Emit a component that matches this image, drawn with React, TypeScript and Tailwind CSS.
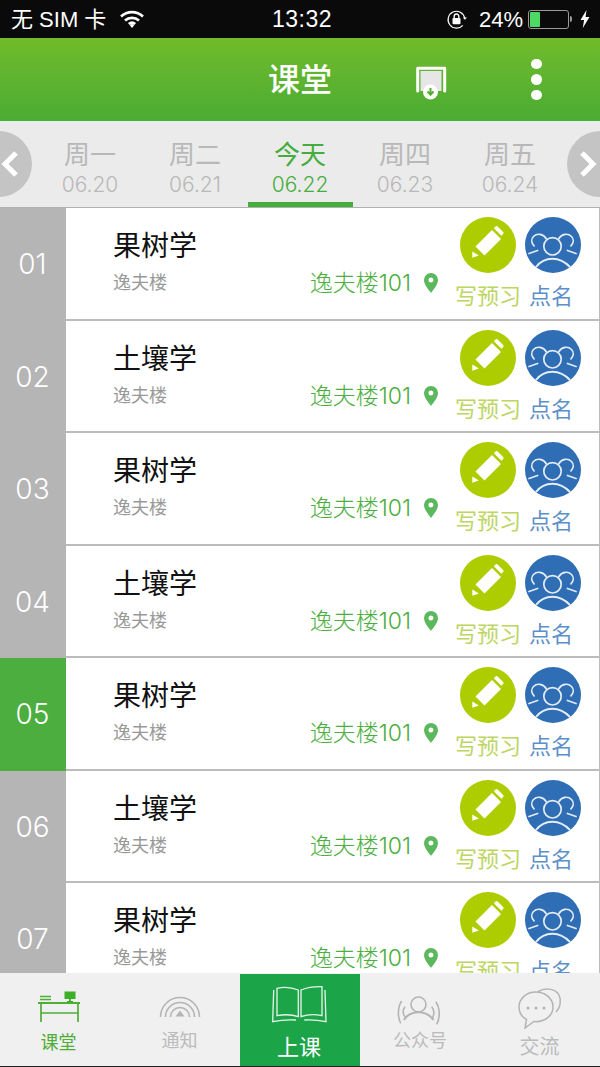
import React from "react";

const days = [
  { label: "周一", date: "06.20" },
  { label: "周二", date: "06.21" },
  { label: "今天", date: "06.22", active: true },
  { label: "周四", date: "06.23" },
  { label: "周五", date: "06.24" },
];

const lessons = [
  { no: "01", name: "果树学" },
  { no: "02", name: "土壤学" },
  { no: "03", name: "果树学" },
  { no: "04", name: "土壤学" },
  { no: "05", name: "果树学", active: true },
  { no: "06", name: "土壤学" },
  { no: "07", name: "果树学" },
];

function Wifi() {
  return (
    <svg width="26" height="20" viewBox="0 0 26 20" fill="none" stroke="white" strokeWidth="2.6">
      <path d="M2 7.500a16 16 0 0 1 22 0" />
      <path d="M6 11.500a10.500 10.500 0 0 1 14 0" />
      <path d="M9.800 15a5 5 0 0 1 6.400 0" />
      <path d="M13 19l-2.400-3a4 4 0 0 1 4.800 0z" fill="white" stroke="none" />
    </svg>
  );
}

function RotationLock() {
  return (
    <svg width="21" height="21" viewBox="0 0 20 20" fill="none">
      <path d="M17.800 8.500A8 8 0 1 0 16 15.500" stroke="white" strokeWidth="1.100" />
      <path d="M16 8l2 2.200L20 8z" fill="white" />
      <rect x="6.200" y="8.600" width="7.600" height="6" rx="1" fill="white" />
      <path d="M7.800 8.600V7a2.200 2.200 0 0 1 4.400 0v1.600" stroke="white" strokeWidth="1.300" />
    </svg>
  );
}

function Battery() {
  return (
    <div className="flex items-center">
      <div className="h-[19px] w-[41px] rounded-[3px] border border-[#9a9a9a] p-px">
        <div className="h-full w-[10px] rounded-[1px] bg-[#4cd964]" />
      </div>
      <div className="ml-[1px] h-[6px] w-[2px] rounded-r-sm bg-[#9a9a9a]" />
    </div>
  );
}

function Bolt() {
  return (
    <svg width="10" height="18" viewBox="0 0 10 18" fill="white">
      <path d="M6.500 0L0.500 10h3.600L2.800 18 9.500 7H5.600z" />
    </svg>
  );
}

function ExportIcon() {
  return (
    <svg width="32" height="36" viewBox="0 0 32 36">
      <path d="M2.700 26V3.200h27V26" fill="none" stroke="white" strokeWidth="3" strokeLinejoin="round" strokeLinecap="round" />
      <rect x="5.500" y="6" width="21" height="20" fill="#e6e6e6" />
      <circle cx="15.500" cy="27" r="7.500" fill="white" />
      <path d="M15.500 23v6M12.500 26.500l3 3.200 3-3.200" fill="none" stroke="#55b030" strokeWidth="2" />
    </svg>
  );
}

function Pencil() {
  return (
    <svg width="56" height="56" viewBox="0 0 56 56">
      <circle cx="28" cy="28" r="28" fill="#aecd00" />
      <path d="M15.500 29.500L32 13l9 9-16.500 16.500z" fill="white" />
      <path d="M33.800 11.200l1.700-1.700a1.500 1.500 0 0 1 2.100 0l5.500 5.500a1.500 1.500 0 0 1 0 2.100l-1.700 1.700z" fill="white" />
      <path d="M12.300 34.500v6.300l6.500-2.300z" fill="white" />
    </svg>
  );
}

function People() {
  return (
    <svg width="56" height="56" viewBox="0 0 56 56" fill="none">
      <circle cx="28" cy="28" r="28" fill="#2f6db5" />
      <g stroke="#e4ecf6" strokeWidth="1.700">
        <circle cx="27.500" cy="29.300" r="8.700" />
        <path d="M9.500 29.500C6 26 6 22 8.500 19.500c3.500-3.500 9.500-3 13 2.500" />
        <path d="M45.500 29.500C49 26 49 22 46.500 19.500c-3.500-3.500-9.500-3-13 2.500" />
        <path d="M3.300 36.700l10-3.400M51.700 36.700l-10-3.400" />
        <path d="M11 50c4-5.300 10-8.300 16.500-8.300S40 44.700 45 50" strokeWidth="1.900" />
      </g>
    </svg>
  );
}

function Pin() {
  return (
    <svg width="14" height="20" viewBox="0 0 14 20">
      <path fillRule="evenodd" d="M7 0a7 7 0 0 1 7 7c0 4.500-4.500 9.500-7 13C4.500 16.500 0 11.500 0 7a7 7 0 0 1 7-7zm0 4.500a2.500 2.500 0 1 0 0 5 2.500 2.500 0 0 0 0-5z" fill="#5cb85c" />
    </svg>
  );
}

function Chevron({ right }: { right?: boolean }) {
  return (
    <svg width="18" height="26" viewBox="0 0 18 26" fill="none" stroke="white" strokeWidth="5">
      <path d={right ? "M3 2l11 11L3 24" : "M15 2L4 13l11 11"} />
    </svg>
  );
}

function DeskIcon() {
  return (
    <svg width="44" height="32" viewBox="0 0 44 32" fill="none" stroke="#4fae36">
      <path d="M0 12h42" strokeWidth="2" />
      <path d="M3 12v19M40 12v19M3 22h37" strokeWidth="1.700" />
      <path d="M2 5.500h11M2 8.500h11" strokeWidth="1.300" />
      <rect x="26.500" y="0.500" width="11" height="7.500" fill="#3fae2a" stroke="none" />
      <path d="M32 8v3M29 11h6" strokeWidth="1.800" stroke="#3fae2a" />
    </svg>
  );
}

function SignalIcon() {
  return (
    <svg width="42" height="26" viewBox="0 0 42 26" fill="none" stroke="#b4b4b4" strokeWidth="1.600">
      <path d="M1.500 24a19.500 19.500 0 0 1 39 0" />
      <path d="M6.500 24a14.500 14.500 0 0 1 29 0" />
      <path d="M11.500 24a9.500 9.500 0 0 1 19 0" />
      <path d="M21 17.500l4.500 6h-9z" fill="#b4b4b4" stroke="none" />
    </svg>
  );
}

function BookIcon() {
  return (
    <svg width="58" height="42" viewBox="0 0 58 42" fill="none" stroke="#e8f5ec" strokeWidth="1.300">
      <path d="M6 4.300C13 2.800 21 3.500 27.300 6v26.700C21 30.500 13 30.300 6 31.700z" />
      <path d="M51 2.700C44 2.600 36 3.500 30 6v26.700c6-2.200 14-2.500 21-1z" />
      <path d="M2.700 6L1.700 37.700c8-1.700 16-2.200 23.300-1.700" />
      <path d="M54 6l1 31.700c-8-1.700-15-2.200-21.700-1.700" />
    </svg>
  );
}

function PersonIcon() {
  return (
    <svg width="46" height="34" viewBox="0 0 46 34" fill="none" stroke="#b4b4b4" strokeWidth="1.600">
      <circle cx="21.500" cy="11.500" r="7.500" />
      <path d="M7 27c3-5 8.500-7.700 14.500-7.700S33 22 36.500 27" strokeWidth="2" />
      <path d="M4.700 8C.5 14 .5 24 3.700 30.300M8 13.700c-2.500 3.500-2.500 7.500.7 11" />
      <path d="M38.700 8.700c4.500 6 4.500 16 1 22.600M34.700 13.700c2.800 3.500 2.800 7.500.6 11.600" />
    </svg>
  );
}

function ChatIcon() {
  return (
    <svg width="44" height="42" viewBox="0 0 44 42" fill="none" stroke="#b4b4b4" strokeWidth="1.500">
      <path d="M20 4.500C27 .5 37 1 41 8c3 6 1 13-3 17" />
      <path d="M18 5C8.500 5 1 11.500 1 20c0 5.500 3 10 7.500 12.500L7 41l9-6.500c1 .1 1.500.2 2 .2 9.500 0 17-6.500 17-14.700S27.500 5 18 5z" />
      <g fill="#b4b4b4" stroke="none">
        <circle cx="10" cy="21" r="1.500" />
        <circle cx="18" cy="21" r="1.500" />
        <circle cx="26" cy="21" r="1.500" />
      </g>
    </svg>
  );
}

export default function App() {
  return (
    <div className="flex h-[1067px] w-[600px] flex-col overflow-hidden bg-white font-['Inter','Noto_Sans_CJK_SC',sans-serif]">
      {/* status bar */}
      <div className="grid h-[38px] shrink-0 grid-cols-[1fr_auto_1fr] items-center bg-[#0a0a0a] pl-[11px] pr-[10px] text-white">
        <div className="flex items-center gap-[13px]">
          <span className="font-['Liberation_Sans','Noto_Sans_CJK_SC',sans-serif] text-[22px]">无 SIM 卡</span>
          <Wifi />
        </div>
        <span className="ml-[3px] font-['Liberation_Sans',sans-serif] text-[23px] tracking-[0.5px]">13:32</span>
        <div className="flex items-center justify-end">
          <RotationLock />
          <span className="ml-[12px] font-['Liberation_Sans',sans-serif] text-[22px]">24%</span>
          <div className="ml-[5px] mr-[8px]">
            <Battery />
          </div>
          <Bolt />
        </div>
      </div>

      {/* header */}
      <div className="grid h-[83px] shrink-0 grid-cols-[1fr_auto_1fr] items-center bg-gradient-to-b from-[#71bb2b] to-[#49ac33] text-white">
        <div />
        <h1 className="text-[32px] font-medium leading-none">课堂</h1>
        <div className="flex items-center pl-[83px]">
          <div className="mt-[7px]">
            <ExportIcon />
          </div>
          <div className="ml-[84px] flex flex-col gap-[5px]">
            <span className="size-[10.500px] rounded-full bg-white" />
            <span className="size-[10.500px] rounded-full bg-white" />
            <span className="size-[10.500px] rounded-full bg-white" />
          </div>
        </div>
      </div>

      {/* week tabs */}
      <div className="relative flex h-[87px] shrink-0 justify-center border-b border-[#b0b0b0] bg-[#ebebeb]">
        {days.map((d) => (
          <div
            key={d.date}
            className={`flex w-[105px] flex-col items-center pt-[17px] ${d.active ? "border-b-[5px] border-[#45ad3c] text-[#45ad3c]" : "text-[#b8b8b8]"}`}
          >
            <span className="text-[26px] leading-[34px]">{d.label}</span>
            <span className="text-[21px] font-light leading-[25px]">{d.date}</span>
          </div>
        ))}
        <div className="absolute -left-[34px] top-[10px] flex size-[66px] items-center justify-end rounded-full bg-[#c4c4c4] pr-[13px]">
          <Chevron />
        </div>
        <div className="absolute -right-[33px] top-[10px] flex size-[66px] items-center justify-start rounded-full bg-[#c4c4c4] pl-[12px]">
          <Chevron right />
        </div>
      </div>

      {/* lessons */}
      <div className="min-h-0 flex-1 overflow-hidden">
        {lessons.map((l) => (
          <div key={l.no} className="flex h-[112.500px]">
            <div className={`flex w-[66px] shrink-0 items-center justify-center pr-[1px] text-[28px] font-light text-white ${l.active ? "bg-[#4bae3f]" : "bg-[#b5b5b5]"}`}>
              {l.no}
            </div>
            <div className="flex min-w-0 flex-1 border-b-2 border-r border-[#bcbcbc] bg-white">
              <div className="flex flex-1 flex-col pl-[47px] pr-[17px] pt-[20px]">
                <span className="text-[28px] leading-[36px] text-[#111]">{l.name}</span>
                <div className="mt-[4px] flex items-center">
                  <span className="text-[18px] leading-[30px] text-[#999]">逸夫楼</span>
                  <span className="ml-auto text-[23px] font-light leading-[30px] text-[#4cae3e]">逸夫楼101</span>
                  <span className="ml-[13px]">
                    <Pin />
                  </span>
                </div>
              </div>
              <div className="flex w-[144px] shrink-0 pt-[9px]">
                <div className="flex w-[65px] flex-col">
                  <span className="ml-[5px]">
                    <Pencil />
                  </span>
                  <span className="mt-[9px] whitespace-nowrap text-[22px] leading-[28px] text-[#bcd65f]">写预习</span>
                </div>
                <div className="flex w-[62px] flex-col items-center">
                  <span className="ml-[5px] self-start">
                    <People />
                  </span>
                  <span className="mt-[9px] text-[22px] leading-[28px] text-[#5d8fc9]">点名</span>
                </div>
              </div>
            </div>
          </div>
        ))}
      </div>

      {/* bottom nav */}
      <div className="grid h-[94px] shrink-0 grid-cols-5 border-b border-[#222] bg-[#f0f0f0]">
        <div className="flex flex-col items-center pt-[18px] text-[#4fae36]">
          <DeskIcon />
          <span className="mr-[3px] mt-[8px] text-[18px] leading-[24px]">课堂</span>
        </div>
        <div className="flex flex-col items-center pt-[20px] text-[#bbb]">
          <SignalIcon />
          <span className="mr-[1px] mt-[10px] text-[18px] leading-[24px]">通知</span>
        </div>
        <div className="mt-px flex flex-col items-center bg-[#1ca548] pt-[10px] text-white">
          <BookIcon />
          <span className="mr-[2px] mt-[7px] text-[22px] leading-[28px]">上课</span>
        </div>
        <div className="flex flex-col items-center pt-[20px] text-[#bbb]">
          <PersonIcon />
          <span className="mt-[2px] text-[18px] leading-[24px]">公众号</span>
        </div>
        <div className="flex flex-col items-center pt-[14px] text-[#bbb]">
          <ChatIcon />
          <span className="mr-[1px] mt-[5px] text-[20px] leading-[26px]">交流</span>
        </div>
      </div>
    </div>
  );
}
